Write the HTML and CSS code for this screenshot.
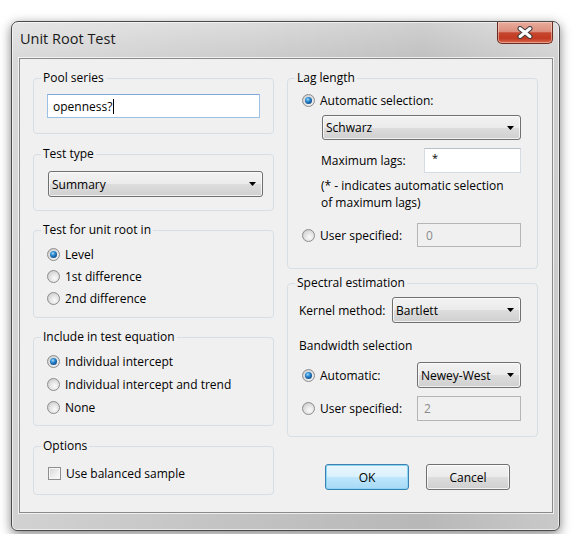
FILE: index.html
```html
<!DOCTYPE html>
<html>
<head>
<meta charset="utf-8">
<title>Unit Root Test</title>
<link rel="stylesheet" href="styles.css">
</head>
<body>
<div class="window">
  <div class="titlebar">
    <span class="title">Unit Root Test</span>
    <div class="close">
      <svg width="16" height="13" viewBox="0 0 16 13">
        <path d="M3 2.5L13 10.5M13 2.5L3 10.5" stroke="#3d3d3d" stroke-width="5" stroke-linecap="round"/>
        <path d="M3 2.5L13 10.5M13 2.5L3 10.5" stroke="#ffffff" stroke-width="3" stroke-linecap="round"/>
      </svg>
    </div>
  </div>
  <div class="client">
    <div class="col">
      <fieldset class="group g-pool">
        <legend>Pool series</legend>
        <div class="textbox focus tb-pool"><span>openness?</span><span class="caret"></span></div>
      </fieldset>
      <fieldset class="group g-type">
        <legend>Test type</legend>
        <div class="combo cb-type"><span>Summary</span><svg class="arrow" width="7" height="4" viewBox="0 0 7 4"><path d="M0 0H7L3.5 4Z" fill="#000"/></svg></div>
      </fieldset>
      <fieldset class="group g-unit">
        <legend>Test for unit root in</legend>
        <div class="radios">
          <div class="opt row22"><span class="radio"><span class="dot"></span></span><span>Level</span></div>
          <div class="opt row22"><span class="radio"></span><span>1st difference</span></div>
          <div class="opt row22"><span class="radio"></span><span>2nd difference</span></div>
        </div>
      </fieldset>
      <fieldset class="group g-incl">
        <legend>Include in test equation</legend>
        <div class="radios">
          <div class="opt row23"><span class="radio"><span class="dot"></span></span><span>Individual intercept</span></div>
          <div class="opt row23"><span class="radio"></span><span>Individual intercept and trend</span></div>
          <div class="opt row23"><span class="radio"></span><span>None</span></div>
        </div>
      </fieldset>
      <fieldset class="group g-opt">
        <legend>Options</legend>
        <div class="radios checks">
          <div class="opt row22"><span class="check"></span><span>Use balanced sample</span></div>
        </div>
      </fieldset>
    </div>
    <div class="col">
      <fieldset class="group g-lag">
        <legend>Lag length</legend>
        <div class="opt ind row-auto"><span class="radio"><span class="dot"></span></span><span>Automatic selection:</span></div>
        <div class="combo cb-schwarz"><span>Schwarz</span><svg class="arrow" width="7" height="4" viewBox="0 0 7 4"><path d="M0 0H7L3.5 4Z" fill="#000"/></svg></div>
        <div class="field-row fr-max"><span class="lbl-max">Maximum lags:</span><div class="textbox tb-max"><span class="ast">*</span></div></div>
        <p class="note">(* - indicates automatic selection<br>of maximum lags)</p>
        <div class="opt ind row-user"><span class="radio"></span><span class="lbl-radio">User specified:</span><div class="textbox disabled tb-user">0</div></div>
      </fieldset>
      <fieldset class="group g-spec">
        <legend>Spectral estimation</legend>
        <div class="field-row fr-kernel"><span class="lbl-kernel">Kernel method:</span><div class="combo cb-kernel"><span>Bartlett</span><svg class="arrow" width="7" height="4" viewBox="0 0 7 4"><path d="M0 0H7L3.5 4Z" fill="#000"/></svg></div></div>
        <div class="sublabel">Bandwidth selection</div>
        <div class="opt ind row-bw-auto"><span class="radio"><span class="dot"></span></span><span class="lbl-radio">Automatic:</span><div class="combo cb-nw"><span>Newey-West</span><svg class="arrow" width="7" height="4" viewBox="0 0 7 4"><path d="M0 0H7L3.5 4Z" fill="#000"/></svg></div></div>
        <div class="opt ind row-bw-user"><span class="radio"></span><span class="lbl-radio">User specified:</span><div class="textbox disabled tb-bw">2</div></div>
      </fieldset>
      <div class="buttons">
        <div class="btn default">OK</div>
        <div class="btn">Cancel</div>
      </div>
    </div>
  </div>
</div>
</body>
</html>
```
FILE: styles.css
```css
* { box-sizing: border-box; }
html, body { margin: 0; padding: 0; background: #fff; }
body {
  width: 574px;
  height: 534px;
  overflow: hidden;
  font-family: "Open Sans", "Liberation Sans", sans-serif;
  font-size: 12px;
  color: #000;
}

.window {
  margin: 21px 0 0 11px;
  width: 549px;
  height: 510px;
  border: 1px solid #4a4a4a;
  border-radius: 7px 7px 6px 6px;
  background: linear-gradient(90deg, rgba(255,255,255,0.25) 0, rgba(255,255,255,0) 40%, rgba(0,0,0,0.06) 75%, rgba(255,255,255,0.1) 100%),
              linear-gradient(180deg, #dddddd 0, #cbcbcb 40px, #c3c3c3 100%);
  box-shadow: 0 3px 11px rgba(0,0,0,0.5), inset 0 0 0 1px rgba(255,255,255,0.6);
  padding: 0 6px 17px 7px;
  display: flex;
  flex-direction: column;
}

.titlebar {
  height: 36px;
  display: flex;
  justify-content: space-between;
  align-items: flex-start;
}
.title {
  font-size: 14.5px;
  line-height: 16px;
  margin: 9px 0 0 1px;
  color: #1a1a1a;
}
.close {
  width: 56px;
  height: 22px;
  border: 1px solid #6a2b20;
  border-top: none;
  border-radius: 0 0 5px 5px;
  background: linear-gradient(180deg, #e9ab9c 0, #dc8f7d 45%, #c5452e 52%, #c23a22 78%, #d8684c 100%);
  box-shadow: inset 0 0 0 1px rgba(255,220,210,0.5);
  display: flex;
  align-items: center;
  justify-content: center;
}

.client {
  height: 455px;
  border: 1px solid #8a8a8a;
  box-shadow: 0 0 0 1px rgba(255,255,255,0.7);
  background: #f0f0f0;
  display: grid;
  grid-template-columns: 241px 251px;
  column-gap: 13px;
  align-items: start;
  padding: 11px 0 0 13px;
}
.col {
  display: flex;
  flex-direction: column;
}

.group {
  margin: 0;
  padding: 0;
  min-width: 0;
  border: 1px solid #d5dfe5;
  border-radius: 4px;
}
.group legend {
  margin-left: 7px;
  padding: 0 2px;
  line-height: 16px;
  font-size: 12px;
}

.g-pool { height: 64px; }
.g-type { height: 65px; margin-top: 12px; }
.g-unit { height: 96px; margin-top: 11px; }
.g-incl { height: 97px; margin-top: 11px; }
.g-opt { height: 57px; margin-top: 12px; }
.g-lag { height: 199px; }
.g-spec { height: 162px; margin-top: 6px; }

/* text fields */
.textbox {
  display: flex;
  align-items: center;
  background: #fff;
  border: 1px solid #d6dce4;
  border-top-color: #b9bfc7;
  padding-left: 6px;
}
.textbox.focus {
  border-color: #9cc0e6;
  border-top-color: #7fa9d8;
}
.textbox.disabled {
  background: #f0f0f0;
  border-color: #b5b5b5;
  color: #8a8a8a;
}
.tb-pool { margin: 8px 0 0 13px; width: 213px; height: 24px; padding-left: 5px; }
.caret { display: inline-block; width: 1px; height: 15px; background: #000; margin-left: 1px; }
.tb-max { width: 97px; height: 25px; align-items: flex-start; padding-top: 1px; padding-left: 7px; }
.ast { font-size: 11px; }
.tb-user { width: 104px; height: 24px; padding-left: 8px; }
.tb-bw { width: 104px; height: 25px; padding-left: 6px; }

/* combo boxes */
.combo {
  display: flex;
  align-items: center;
  justify-content: space-between;
  border: 1px solid #707070;
  border-radius: 3px;
  background: linear-gradient(180deg, #f2f2f2 0, #ebebeb 50%, #dddddd 51%, #cfcfcf 100%);
  box-shadow: inset 0 0 0 1px rgba(255,255,255,0.7);
  padding: 0 6px 0 3px;
}
.arrow { flex: none; }
.cb-type { margin: 9px 0 0 14px; width: 215px; height: 26px; }
.cb-schwarz { margin: 4px 0 0 34px; width: 199px; height: 25px; }
.cb-kernel { width: 129px; height: 26px; }
.cb-nw { width: 104px; height: 26px; }

/* radios / checks */
.radios { padding: 5px 0 0 13px; }
.checks { padding-top: 8px; padding-left: 14px; }
.opt {
  display: flex;
  align-items: center;
  gap: 5px;
}
.row22 { height: 22px; }
.row23 { height: 23px; }
.ind { padding-left: 14px; }

.radio {
  flex: none;
  width: 13px;
  height: 13px;
  border-radius: 50%;
  border: 1px solid #8b8c8c;
  background: radial-gradient(circle at 60% 65%, #fbfbfb 0, #e4e4e4 45%, #c2c2c2 100%);
  display: flex;
  align-items: center;
  justify-content: center;
}
.dot {
  width: 7px;
  height: 7px;
  border-radius: 50%;
  background: radial-gradient(circle at 40% 35%, #9fdcff 0, #2c88cf 35%, #11508f 72%, #0a2b57 100%);
}
.check {
  flex: none;
  width: 13px;
  height: 13px;
  border: 1px solid #8e8f8f;
  background: linear-gradient(135deg, #d4d4d4 0, #f0f0f0 60%, #fbfbfb 100%);
  box-shadow: inset 0 0 0 1px #f6f6f6;
}

/* right column rows */
.row-auto { margin-top: 3px; height: 22px; }
.field-row { display: flex; align-items: center; }
.fr-max { margin: 8px 0 0 33px; }
.lbl-max { width: 103px; }
.note { margin: 4px 0 0 33px; line-height: 17px; }
.row-user { margin-top: 12px; }
.lbl-radio { width: 92px; }
.fr-kernel { margin: 6px 0 0 11px; }
.lbl-kernel { width: 93px; }
.sublabel { margin: 14px 0 0 11px; line-height: 17px; }
.row-bw-auto { margin-top: 8px; }
.row-bw-user { margin-top: 8px; }

/* buttons */
.buttons {
  display: flex;
  gap: 17px;
  margin: 27px 0 0 38px;
}
.btn {
  width: 84px;
  height: 26px;
  border: 1px solid #707070;
  border-radius: 3px;
  background: linear-gradient(180deg, #f2f2f2 0, #ebebeb 50%, #dddddd 51%, #cfcfcf 100%);
  box-shadow: inset 0 0 0 1px rgba(255,255,255,0.75);
  display: flex;
  align-items: center;
  justify-content: center;
}
.btn.default {
  border-color: #3c7fb1;
  background: linear-gradient(180deg, #eaf6fd 0, #d9f0fc 50%, #bee6fd 51%, #a7d9f5 100%);
  box-shadow: inset 0 0 0 1px #8ad6f4;
}
```
